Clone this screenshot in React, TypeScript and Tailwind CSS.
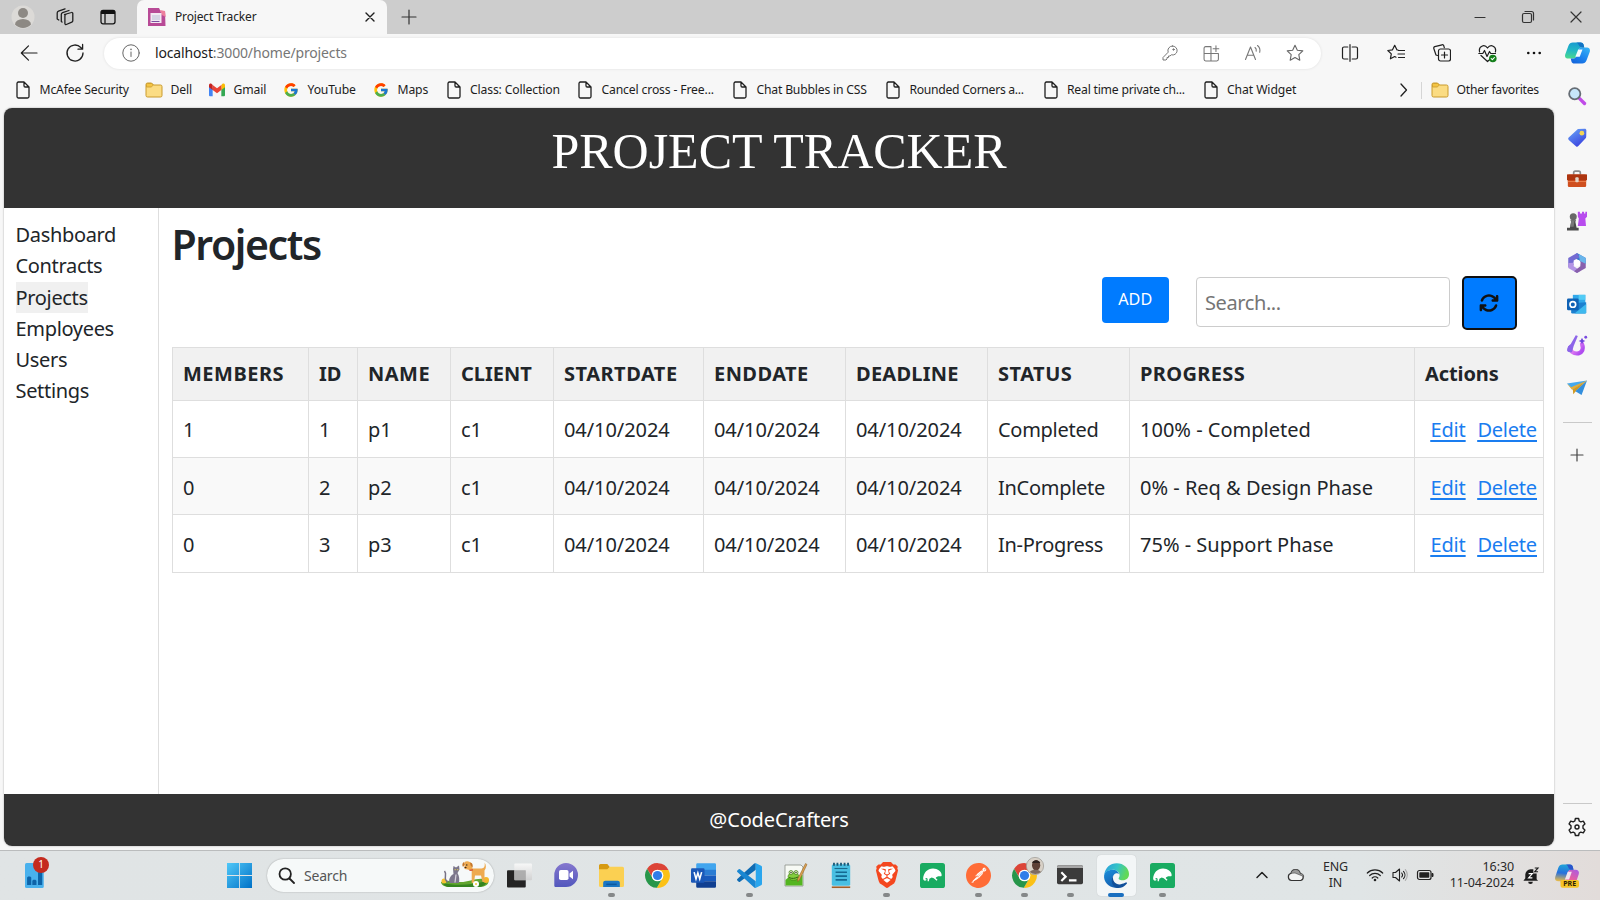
import type { ReactNode } from "react";
import { FcGoogle } from "react-icons/fc";
import { FaArrowsRotate } from "react-icons/fa6";
import { SiBrave, SiPostman } from "react-icons/si";

type SvgProps = { s?: number; c?: string; sw?: number; vb?: string; children: ReactNode };

function Line({ s = 20, c = "#1f1f1f", sw = 1.2, vb = "0 0 20 20", children }: SvgProps) {
  return (
    <svg width={s} height={s} viewBox={vb} fill="none" stroke={c} strokeWidth={sw} strokeLinecap="round" strokeLinejoin="round" className="block shrink-0">
      {children}
    </svg>
  );
}

function Pic({ s = 20, vb = "0 0 24 24", children }: SvgProps) {
  return (
    <svg width={s} height={s} viewBox={vb} className="block shrink-0 overflow-visible">
      {children}
    </svg>
  );
}

const FileIcon = () => (
  <Line s={18} vb="0 0 18 18" sw={1.3}>
    <path d="M4 1h6l5 5v9.500a1.500 1.500 0 0 1-1.500 1.500h-9A1.500 1.500 0 0 1 3 15.500v-13A1.500 1.500 0 0 1 4.500 1z M10 1v3.800a1.200 1.200 0 0 0 1.200 1.200H15" />
  </Line>
);

const FolderIcon = () => (
  <Pic s={18} vb="0 0 18 18">
    <path d="M1 3.500A1.500 1.500 0 0 1 2.500 2h4l2 2h7A1.500 1.500 0 0 1 17 5.500v9a1.500 1.500 0 0 1-1.500 1.500h-13A1.500 1.500 0 0 1 1 14.500z" fill="#fbdc83" stroke="#c99a2c" />
    <path d="M1.500 6h4.700l2.200-2-1.800-1.500h-4a1 1 0 0 0-1.100 1z" fill="#f4c443" stroke="#c99a2c" strokeWidth=".8" />
  </Pic>
);

const GmailIcon = () => (
  <Pic s={16} vb="0 0 24 24">
    <path d="M0 5v15a1.500 1.500 0 0 0 1.500 1.500H5.500V10z" fill="#4285f4" />
    <path d="M24 5v15a1.500 1.500 0 0 1-1.500 1.500H18.500V10z" fill="#34a853" />
    <path d="M18.500 4.500V12L24 8V5c0-2.600-2.600-3.200-4-2z" fill="#fbbc04" />
    <path d="M5.500 4.500 12 9.300l6.500-4.800V12L12 16.800 5.500 12z" fill="#ea4335" />
    <path d="M0 5c0-2.600 2.600-3.200 4-2l1.500 1.500V12L0 8z" fill="#c5221f" />
  </Pic>
);

const Copilot = ({ w, h, pre = false }: { w: number; h: number; pre?: boolean }) => (
  <svg width={w} height={h} viewBox="0 0 24 24" preserveAspectRatio="none" className="block shrink-0 overflow-visible">
    <defs>
      <linearGradient id={pre ? "cpA" : "coA"} x1="0.400" y1="0" x2=".3" y2="1">
        <stop offset="0" stopColor={pre ? "#1fa4d8" : "#189bd0"} />
        <stop offset=".5" stopColor={pre ? "#2870dd" : "#22b9c4"} />
        <stop offset="1" stopColor={pre ? "#eebd45" : "#4bd98c"} />
      </linearGradient>
      <linearGradient id={pre ? "cpB" : "coB"} x1="1" y1="0" x2=".3" y2="1">
        <stop offset="0" stopColor={pre ? "#a55be8" : "#39b8f5"} />
        <stop offset=".6" stopColor={pre ? "#ec5f9b" : "#1c84ef"} />
        <stop offset="1" stopColor={pre ? "#f7914b" : "#1668dd"} />
      </linearGradient>
    </defs>
    <path d="M3.300 4C4.200 1.500 5.500.5 7.500.5h7.500c1.500 0 2.300.8 2.800 2.300l.7 3.100h-2c-1.800 0-2.800.8-3.300 2.300l-2.300 7.600c-.5 1.600-1.400 2.300-3 2.300H3.600C.9 18.100-.5 16.500.2 13.500z" fill={pre ? "url(#cpA)" : "url(#coA)"} />
    <path d="M20.700 20c-.9 2.500-2.200 3.500-4.200 3.500H9c-1.500 0-2.300-.8-2.800-2.300l-.7-3.100h2c1.800 0 2.800-.8 3.300-2.300l2.300-7.600c.5-1.500 1.500-2.300 3.300-2.300h4c2.700 0 4.100 1.600 3.400 4.600z" fill={pre ? "url(#cpB)" : "url(#coB)"} />
    <path d="M12.700 8.200h4.100l-2.700 8h-4.200z" fill={pre ? "#f3e4ee" : "#f2fbff"} />
    <path d="M10.500.5H15c1.500 0 2.300.8 2.800 2.300l.7 3.100h-2c-1.400 0-2.600-.9-3-2C12.800 2 12 .6 10.500.5z" fill={pre ? "#2b55cc" : "#1273c4"} />
    {pre && (
      <g>
        <rect x="5.500" y="16.600" width="18.500" height="8.200" rx="2" fill="#f7c325" />
        <text x="14.700" y="23.400" fontSize="7" fontWeight="700" textAnchor="middle" fill="#2a2205" fontFamily="Noto Sans, sans-serif">PRE</text>
      </g>
    )}
  </svg>
);

function Bookmark({ icon, label, w, t = "" }: { icon: ReactNode; label: string; w: string; t?: string }) {
  return (
    <div className={`flex shrink-0 items-center ${w}`}>
      <div className="mr-2 flex w-[17px] shrink-0 justify-center">{icon}</div>
      <span className={`whitespace-nowrap ${t}`}>{label}</span>
    </div>
  );
}

function TitleBar() {
  return (
    <div className="flex h-[33.500px] shrink-0 items-stretch bg-[#cdcdcd]">
      <div className="flex w-[136.500px] items-center">
        <div className="flex w-[46px] justify-center">
          <Pic s={24}>
            <circle cx="12" cy="12" r="11.500" fill="#dcdad7" />
            <circle cx="12" cy="8" r="5" fill="#8d8984" />
            <path d="M4 19.500a8 5.500 0 0 1 16 0 11 11 0 0 1-16 0z" fill="#8d8984" />
          </Pic>
        </div>
        <div className="flex w-[38px] justify-center">
          <Line s={18} vb="0 0 18 18" sw={1.3}>
            <path d="M8.500 6.500 15.500 4.500a1 1 0 0 1 1.300 1v7.300a1.500 1.500 0 0 1-1 1.400l-5.500 2.300a1 1 0 0 1-1.400-.9V7.800a1.500 1.500 0 0 1 1-1.300z" />
            <path d="M6 14 5.300 13.500V6.500a2 2 0 0 1 1.300-1.900L13 2.500" />
            <path d="M2.800 12 1.200 11V5a2 2 0 0 1 1.300-1.900L9 .8" />
          </Line>
        </div>
        <div className="flex w-[48px] justify-center">
          <Pic s={16} vb="0 0 16 16">
            <rect x="1" y="1.300" width="14" height="13.500" rx="2" fill="none" stroke="#151515" strokeWidth="1.300" />
            <path d="M1 5V3a2 2 0 0 1 2-2h10a2 2 0 0 1 2 2v2z" fill="#111" />
            <path d="M5 5v9.500" stroke="#151515" strokeWidth="1.300" />
          </Pic>
        </div>
      </div>
      <div className="flex w-[250px] items-center rounded-t-[7px] bg-[#f7f7f7] pr-[8.500px] pl-[11px]">
        <Pic s={18} vb="0 0 18 18">
          <path d="M0 0h11l2 4 4-1 .5 15H0z" fill="#b84a96" />
          <path d="M12 2l5 1 .8 6-4-2z" fill="#ed7f9d" />
          <rect x="2.500" y="5" width="11" height="10" fill="#f2e8f2" />
          <path d="M4 7h8v5H4z" fill="#d6d4e4" />
          <path d="M3.500 13.500h8" stroke="#7b4fa0" />
        </Pic>
        <span className="ml-[9.500px] text-[12px] tracking-[-0.150px] text-[#222]">Project Tracker</span>
        <div className="ml-auto">
          <Line s={16} vb="0 0 16 16" sw={1.4}><path d="M4 4l8 8M12 4l-8 8" /></Line>
        </div>
      </div>
      <div className="flex w-[44px] items-center justify-center">
        <Line s={16} vb="0 0 16 16" sw={1.2} c="#333"><path d="M8 1v14M1 8h14" /></Line>
      </div>
      <div className="ml-auto flex items-center">
        <div className="flex w-[48px] justify-center"><Line s={14} vb="0 0 14 14" c="#333"><path d="M2 7.500h10" /></Line></div>
        <div className="flex w-[48px] justify-center">
          <Line s={14} vb="0 0 14 14" c="#333"><rect x="1.500" y="3.500" width="9" height="9" rx="1.500" /><path d="M4 1.500h6.500a2 2 0 0 1 2 2V10" /></Line>
        </div>
        <div className="flex w-[48px] justify-center"><Line s={14} vb="0 0 14 14" c="#333"><path d="M2 2l10 10M12 2L2 12" /></Line></div>
      </div>
    </div>
  );
}

function Toolbar() {
  const cell = "flex w-[46px] justify-center";
  const inner = "flex w-[41.700px] justify-center";
  return (
    <div className="flex h-[39px] shrink-0 items-center">
      <div className="flex w-[58px] justify-center">
        <Line s={18} vb="0 0 18 18" sw={1.2}><path d="M17 9H1.500M8.500 1.800 1.300 9l7.200 7.200" /></Line>
      </div>
      <div className="flex w-[46px] justify-center pr-[12px]">
        <Line s={20} sw={1.3}><path d="M18 10a8 8 0 1 1-2.200-5.500L17.500 6M17.600 1.500V6.200H13" /></Line>
      </div>
      <div className="flex h-[31px] w-[1217px] items-center rounded-full bg-white shadow-[0_0_3px_rgba(0,0,0,0.100)]">
        <div className="ml-[18px]">
          <Line s={18} vb="0 0 18 18" sw={1} c="#666"><circle cx="9" cy="9" r="8.200" /><path d="M9 8v4.500" /><path d="M9 5.200v.2" strokeWidth="1.500" /></Line>
        </div>
        <div className="ml-[15px] pb-px text-[14px] tracking-[-0.150px] text-[#767676]"><span className="text-[#1b1b1b]">localhost</span>:3000/home/projects</div>
        <div className="ml-auto mr-[5px] flex items-center">
          <div className={inner}>
            <Line s={16} vb="0 0 16 16" sw={1} c="#777"><path d="M10.500 1a4.500 4.500 0 1 1-1.200 8.800L8 11H6.500v1.500H5V14l-1 1H1v-2.500L6.200 7.200A4.500 4.500 0 0 1 10.500 1z" /><circle cx="11.500" cy="4.500" r=".7" fill="#777" /></Line>
          </div>
          <div className={inner}>
            <Line s={17} vb="0 0 16 16" sw={1} c="#777"><path d="M7.500 1.500h-5a1.500 1.500 0 0 0-1.500 1.500v10.500a1.500 1.500 0 0 0 1.500 1.500H13a1.500 1.500 0 0 0 1.500-1.500V8H1M7.500 1.500V15M12.200.8v5.400M9.500 3.500h5.400" /></Line>
          </div>
          <div className={inner}>
            <Line s={18} vb="0 0 18 18" sw={1.1} c="#777"><path d="M1.500 15.500 6.500 3 11.500 15.500M3.200 11.300h6.600M11 3.500c1.300 1 1.500 2.200 1.200 3.700M13.500 1.500c2.300 1.800 2.800 4.200 2.200 6.800" /></Line>
          </div>
          <div className={inner}>
            <Line s={18} vb="0 0 18 18" sw={1.1} c="#666"><path d="M9 1.200l2.350 5 5.450.7-4 3.800 1 5.500L9 13.500l-4.800 2.700 1-5.500-4-3.800 5.450-.7z" /></Line>
          </div>
        </div>
      </div>
      <div className="ml-[5.500px] flex items-center">
        <div className={cell}>
          <Line s={18} vb="0 0 18 18" sw={1.2}><path d="M6.800 3H3a1.500 1.500 0 0 0-1.500 1.500v9A1.500 1.500 0 0 0 3 15h3.800M11.200 3H15a1.500 1.500 0 0 1 1.500 1.500v9A1.500 1.500 0 0 1 15 15h-3.800M9 .7v16.600" /></Line>
        </div>
        <div className={cell}>
          <Line s={18} vb="0 0 18 18" sw={1.2}><path d="M11 6 9.900 5.800 7.700 1.300 5.500 5.800.8 6.500l3.500 3.400-.9 4.900 4.300-2.300 1.300.7M11.500 6.500h6M11 10h6.500M11.500 13.500h6" /></Line>
        </div>
        <div className={cell}>
          <Line s={18} vb="0 0 18 18" sw={1.2}><path d="M4.500 11.500 3 11 .8 4.500a1.400 1.400 0 0 1 1-1.800L9 .8a1.500 1.500 0 0 1 1.800 1l.5 1.800" /><rect x="5.500" y="5" width="12" height="12" rx="2" /><path d="M11.500 8v6M8.500 11h6" /></Line>
        </div>
        <div className={cell}>
          <Line s={19} vb="0 0 19 19" sw={1.2}><path d="M1.600 8C.2 2 6.500-.2 9.500 4c3-4.200 9.300-2 7.900 4M3 11.500l6.500 6 2-1.800M.8 9.500h4L6.500 6.500l2.500 6 2.500-5 1.300 2h4.700" /><circle cx="14.800" cy="14.500" r="3.800" fill="#16801c" stroke="none" /><path d="M13.200 14.600l1.200 1.100 2-2.200" stroke="#fff" strokeWidth="1.100" /></Line>
        </div>
        <div className={cell}>
          <Pic s={16} vb="0 0 16 16"><circle cx="2.300" cy="8" r="1.300" fill="#111" /><circle cx="8" cy="8" r="1.300" fill="#111" /><circle cx="13.700" cy="8" r="1.300" fill="#111" /></Pic>
        </div>
      </div>
      <div className="flex w-[42px] justify-center"><Copilot w={25} h={22} /></div>
    </div>
  );
}

function Bookmarks() {
  return (
    <div className="flex h-[35.500px] shrink-0 items-center pl-[14.500px] text-[12.200px] tracking-[-0.150px] text-[#1d1d1d]">
      <Bookmark w="w-[131px]" icon={<FileIcon />} label="McAfee Security" />
      <Bookmark w="w-[63px]" icon={<FolderIcon />} label="Dell" />
      <Bookmark w="w-[74px]" icon={<GmailIcon />} label="Gmail" />
      <Bookmark w="w-[90px]" icon={<FcGoogle size={16} />} label="YouTube" />
      <Bookmark w="w-[72.500px]" icon={<FcGoogle size={16} />} label="Maps" />
      <Bookmark w="w-[131.500px]" icon={<FileIcon />} label="Class: Collection" />
      <Bookmark w="w-[155px]" icon={<FileIcon />} label="Cancel cross - Free..." />
      <Bookmark w="w-[153px]" icon={<FileIcon />} label="Chat Bubbles in CSS" t="tracking-[-0.200px]" />
      <Bookmark w="w-[157.500px]" icon={<FileIcon />} label="Rounded Corners a..." t="tracking-[-0.300px]" />
      <Bookmark w="w-[160px]" icon={<FileIcon />} label="Real time private ch..." t="tracking-[-0.220px]" />
      <Bookmark w="w-[192.500px]" icon={<FileIcon />} label="Chat Widget" t="tracking-[-0.100px]" />
      <div className="flex w-[24px] items-center">
        <Line s={16} vb="0 0 16 16" sw={1.3}><path d="M6 2l5.500 6L6 14" /></Line>
      </div>
      <div className="mr-[10px] ml-[2px] h-[17px] w-px bg-[#d5d5d5]" />
      <Bookmark w="w-[120px]" icon={<FolderIcon />} label="Other favorites" t="tracking-[-0.270px]" />
    </div>
  );
}

const rail: ReactNode[] = [
  <Pic s={18}><path d="M14.500 14.500l7.500 7.500" stroke="#c04be8" strokeWidth="4.500" strokeLinecap="round" /><circle cx="9" cy="9" r="7.500" fill="#c6e6fa" stroke="#666d75" strokeWidth="2.400" /></Pic>,
  <Pic s={19}>
    <defs><linearGradient id="tag" x1="0" y1="0" x2=".6" y2="1"><stop stopColor="#6aa9f7" /><stop offset="1" stopColor="#3b45e0" /></linearGradient></defs>
    <path d="M12.500 1.200 21 .8c1.500 0 2.200.8 2.200 2.200L23 11c0 1-.4 1.700-1 2.300l-9 9.500c-1 1-2 1-3 .1L1 15c-1-1-1-2-.1-3z" fill="url(#tag)" /><circle cx="17.500" cy="6.500" r="3" fill="#f3d455" />
  </Pic>,
  <Pic s={20}>
    <path d="M8 7V4.500A2 2 0 0 1 10 2.500h4A2 2 0 0 1 16 4.500V7" fill="none" stroke="#8b8b8b" strokeWidth="2" />
    <rect x="1" y="6.500" width="22" height="15" rx="1.500" fill="#cf4f1f" /><path d="M0 6.500h24v7H0z" fill="#ad3510" /><path d="M1 15h22" stroke="#ee8450" /><rect x="10" y="10" width="4" height="6" rx="1" fill="#e3d5c8" />
  </Pic>,
  <Pic s={20}>
    <path d="M13 1h2.500v2H18V1h2.500v2H22V1h2v6l-2 2 .8 9H13l1.200-9L13 7z" fill="#b84cee" />
    <circle cx="7.500" cy="7" r="4.200" fill="#686868" /><path d="M4 11h7l-1 2 1.500 7H14v3.500H0V20h3.500L5 13z" fill="#4b4b4b" /><path d="M5 12h4l-1 7H4z" fill="#777" />
  </Pic>,
  <Pic s={20}>
    <path d="M12 0 22.500 6v7L15 9.500 8 5z" fill="#3b78cf" /><path d="M12 0 1.500 6v11l6.500-2.500V9l7-4z" fill="#746bd2" /><path d="M1.500 12v6L12 24l4.500-2.800L8 15.800v-4z" fill="#b395e5" /><path d="M22.500 12v6L12 24l-3.500-2 7.500-6V9l6.500 1z" fill="#8860ad" /><path d="M14 1.200 22.500 6v7L15.500 9.500z" fill="#69b5eb" /><circle cx="12" cy="12" r="4" fill="#fff" />
  </Pic>,
  <Pic s={20}>
    <path d="M7 1h15v10H7z" fill="#31a8ea" /><path d="M14 1h8v6h-8z" fill="#52cbf5" /><path d="M5 11l18-1v12a1.500 1.500 0 0 1-1.500 1.500H6.500A1.500 1.500 0 0 1 5 22z" fill="#1c80d0" /><path d="M23 12 9 23.500h12.500A1.500 1.500 0 0 0 23 22z" fill="#3fb9ee" /><rect x="0" y="5.500" width="14" height="14" rx="1.500" fill="#0f62b5" /><circle cx="7" cy="12.500" r="3.400" fill="none" stroke="#fff" strokeWidth="2" />
  </Pic>,
  <Pic s={20}>
    <defs><linearGradient id="des" x1="0" y1="0" x2="1" y2=".6"><stop stopColor="#8c55ef" /><stop offset=".5" stopColor="#e07af2" /><stop offset="1" stopColor="#b04df0" /></linearGradient></defs>
    <path d="M18 9.500c3 8-2 11.500-6 11.500-4.500 0-8-3-8.500-7" fill="none" stroke="url(#des)" strokeWidth="5" strokeLinecap="round" /><path d="M13 0 8 12c-1 3.500-1.500 5.500-2 7.500-3 0-6-.5-6-2.500 0-3 2-6 4.500-7.500L10.500-1z" fill="#8d65e9" /><path d="M18 2l1.300 2.700L22 6l-2.700 1.300L18 10l-1.300-2.700L14 6l2.700-1.300z" fill="#6d42dd" /><circle cx="22.500" cy="1.500" r="1.700" fill="#7a4be0" />
  </Pic>,
  <Pic s={20}>
    <path d="M0 6.500 24 3 7 14z" fill="#46a9ee" /><path d="M24 3 7 13.500l.5 6 3-3.500z" fill="#d39a22" /><path d="M24 3 10 16l7.500 4.500z" fill="#348fdd" /><path d="M0 6.500 6 14 24 3 5 11z" fill="#ecae31" />
  </Pic>,
];

function Rail() {
  return (
    <div className="flex w-[46px] shrink-0 flex-col items-center pt-[2.500px]">
      {rail.map((icon, i) => (
        <div key={i} className="flex h-[41.700px] w-full items-center justify-center">{icon}</div>
      ))}
      <div className="mt-[13px] h-px w-[29px] bg-[#c9c9c9]" />
      <div className="mt-[24px]"><Line s={16} vb="0 0 16 16" c="#444"><path d="M8 2v12M2 8h12" /></Line></div>
      <div className="mt-auto h-px w-[29px] bg-[#c9c9c9]" />
      <div className="mt-[13px] mb-[13px]">
        <Line s={20} sw={1.4}>
          <path d="M8.400 1.500h3.200l.6 2.500 1.600.9 2.500-.8 1.600 2.800-1.900 1.800v2.600l1.900 1.800-1.600 2.800-2.500-.8-1.600.9-.6 2.500H8.400L7.800 16l-1.600-.9-2.500.8-1.600-2.800L4 11.300V8.700L2.100 6.900l1.600-2.800 2.500.8L7.800 4z" /><circle cx="10" cy="10" r="2" />
        </Line>
      </div>
    </div>
  );
}

const columns = [
  { label: "MEMBERS", w: "w-[136px] tracking-[0.500px]" },
  { label: "ID", w: "w-[49px] tracking-[-0.100px]" },
  { label: "NAME", w: "w-[93px] tracking-[0.500px]" },
  { label: "CLIENT", w: "w-[103px] tracking-[0px]" },
  { label: "STARTDATE", w: "w-[150px] tracking-[0.500px]" },
  { label: "ENDDATE", w: "w-[142px] tracking-[0.450px]" },
  { label: "DEADLINE", w: "w-[142px] tracking-[0.250px]" },
  { label: "STATUS", w: "w-[142px] tracking-[0.500px]" },
  { label: "PROGRESS", w: "w-[285px] tracking-[0.350px]" },
  { label: "Actions", w: "w-[129px] tracking-[-0.100px]" },
];

const day = "04/10/2024";
const rows = [
  ["1", "1", "p1", "c1", day, day, day, "Completed", "100% - Completed"],
  ["0", "2", "p2", "c1", day, day, day, "InComplete", "0% - Req & Design Phase"],
  ["0", "3", "p3", "c1", day, day, day, "In-Progress", "75% - Support Phase"],
];

function ProjectTable() {
  return (
    <table className="w-[1371.500px] table-fixed border-collapse text-left text-[20px] leading-[30px]">
      <thead>
        <tr className="h-[53px] bg-[#f1f1f1]">
          {columns.map((c) => (
            <th key={c.label} className={`border border-[#dedede] pt-px pl-[10.500px] font-bold ${c.w}`}>{c.label}</th>
          ))}
        </tr>
      </thead>
      <tbody>
        {rows.map((r) => (
          <tr key={r[1]} className="h-[57.400px] even:bg-[#f9f9f9]">
            {r.map((v, i) => (
              <td key={i} className={`border border-[#dedede] pt-[3px] pl-[10.500px] whitespace-nowrap ${i === 7 ? "tracking-[-0.280px]" : i === 8 ? "" : "tracking-[-0.070px]"}`}>{v}</td>
            ))}
            <td className="border border-[#dedede] pt-[3px] pl-[16px] whitespace-nowrap">
              <div className="flex gap-[12px] tracking-[-0.220px] text-[#1a7df0] underline decoration-[1.500px] underline-offset-[3px]">
                <a>Edit</a>
                <a>Delete</a>
              </div>
            </td>
          </tr>
        ))}
      </tbody>
    </table>
  );
}

const nav = ["Dashboard", "Contracts", "Projects", "Employees", "Users", "Settings"];

function Page() {
  return (
    <div className="ml-[4px] flex min-h-0 flex-1 flex-col overflow-hidden rounded-[8px] bg-white text-[#212529] shadow-[0_0_2px_rgba(0,0,0,0.350)]">
      <header className="flex h-[99.500px] shrink-0 justify-center bg-[#333] pt-[12.500px]">
        <h1 className="font-['Liberation_Serif',serif] text-[50px] leading-[60px] text-white">PROJECT TRACKER</h1>
      </header>
      <div className="flex min-h-0 flex-1">
        <nav className="flex w-[154.500px] shrink-0 flex-col items-start border-r border-[#dedede] pt-[11.500px] pl-[11.500px] text-[20px] leading-[31.300px] tracking-[-0.330px]">
          {nav.map((n) => (
            <a key={n} className={n === "Projects" ? "bg-[#f0f0f0]" : ""}>{n}</a>
          ))}
        </nav>
        <main className="flex flex-1 flex-col pl-[13px]">
          <h2 className="mt-[11.500px] h-[56.500px] text-[41px] leading-[50px] font-semibold tracking-[-1.400px]">Projects</h2>
          <div className="mr-[37.500px] flex items-start justify-end">
            <button className="mt-[1px] mr-[27.500px] h-[46px] w-[66.500px] rounded-[4px] bg-[#007bff] text-[16.200px] text-white">ADD</button>
            <input placeholder="Search..." className="mt-[1px] mr-[12px] h-[50px] w-[254px] rounded-[4px] border border-[#ccc] pt-px pl-[8px] text-[20px] tracking-[-0.400px] placeholder:text-[#757575]" />
            <button className="flex h-[54px] w-[54.500px] items-center justify-center rounded-[5px] border-2 border-[#101010] bg-[#007bff] pt-px text-[#111]">
              <FaArrowsRotate size={20} />
            </button>
          </div>
          <div className="mt-[17px]"><ProjectTable /></div>
        </main>
      </div>
      <footer className="flex h-[52px] shrink-0 items-center justify-center bg-[#333] pt-px text-[20px] tracking-[-0.150px] text-white">@CodeCrafters</footer>
    </div>
  );
}

const Chrome = ({ s = 25 }: { s?: number }) => (
  <Pic s={s}>
    <path d="M2.770 6.010A11 11 0 0 1 21.800 7H12a5 5 0 0 0-4.330 7.500z" fill="#dc4437" />
    <path d="M21.800 7A11 11 0 0 1 11.430 22.990L16.330 14.500A5 5 0 0 0 12 7z" fill="#fbc117" />
    <path d="M11.430 22.990A11 11 0 0 1 2.770 6.010L7.670 14.500A5 5 0 0 0 16.330 14.500z" fill="#27964a" />
    <circle cx="12" cy="12" r="5.200" fill="#fff" /><circle cx="12" cy="12" r="4.100" fill="#2f7de9" />
  </Pic>
);

const Chameleon = () => (
  <Pic s={25}>
    <rect width="24" height="24" rx="2.500" fill="#19ab61" />
    <path d="M3 14.500c.5-5 4-9.200 9.500-9.200 4.500 0 8.300 3 8.300 6.200 0 .8-.3 1.300-1 1.300-2.500-.2-4 .3-4.800 1.700l1.800 1.600-.8 1-2.800-2.400-2-.8-2.200 1.200-.5 2.500H7.300v-2.500c-.8-.8-1.800-.8-2-.2-.2 1 1 1.300 1.300.7-.2 1.800-3.800 2.200-3.600-1.100z" fill="#fff" />
  </Pic>
);

const apps: { icon: ReactNode; dot?: boolean; active?: boolean }[] = [
  { icon: <Pic s={25}><defs><linearGradient id="tv" x1="0" y1="0" x2="0" y2="1"><stop stopColor="#fafafa" /><stop offset="1" stopColor="#cfcfcf" /></linearGradient></defs><rect x="0" y="7" width="18" height="16.500" rx="1" fill="#242424" /><rect x="7" y=".5" width="17" height="16" rx="1" fill="url(#tv)" opacity=".88" /><path d="M7 7h11v9.500H7z" fill="#a6a6a6" opacity=".8" /></Pic> },
  { icon: <Pic s={24}><defs><linearGradient id="ch" x1="0" y1="0" x2="0" y2="1"><stop stopColor="#8577ce" /><stop offset="1" stopColor="#5257bd" /></linearGradient></defs><path d="M12 0a12 12 0 1 1 0 24H1.500C.7 24 .3 23.400.3 22.500V12A12 12 0 0 1 12 0z" fill="url(#ch)" /><rect x="5" y="7" width="9.500" height="10" rx="1.800" fill="#fff" /><path d="M15.500 10.500 19 7.700v8.600l-3.500-2.800z" fill="#fff" /></Pic> },
  { dot: true, icon: <Pic s={25}><path d="M0 2.500A1.500 1.500 0 0 1 1.500 1H8l2.500 3L8 7H0z" fill="#d69a12" /><path d="M0 6h8l2.500-2.500h12A1.500 1.500 0 0 1 24 5v16.500a1.500 1.500 0 0 1-1.500 1.500h-21A1.500 1.500 0 0 1 0 21.500z" fill="#fbd052" /><path d="M4 23v-4a2 2 0 0 1 2-2h12a2 2 0 0 1 2 2v4z" fill="#1a76c4" /><path d="M7 20.500h10" stroke="#0c589f" strokeWidth="1.500" /></Pic> },
  { icon: <Chrome s={27} /> },
  { icon: <Pic s={25}><path d="M5 1.500A1.200 1.200 0 0 1 6.200.3h16.600A1.200 1.200 0 0 1 24 1.500V7H5z" fill="#41a5ee" /><path d="M5 6.500h19V12H5z" fill="#2b7cd3" /><path d="M5 12h19v5.500H5z" fill="#185abd" /><path d="M5 17.500h19v5a1.200 1.200 0 0 1-1.200 1.200H6.200A1.200 1.200 0 0 1 5 22.500z" fill="#103f91" /><rect y="5" width="13" height="14" rx="1.200" fill="#1b58b8" /><path d="M3 8.800l1.800 6.600L6.600 9.500l1.800 5.900 1.800-6.600" fill="none" stroke="#fff" strokeWidth="1.500" /></Pic> },
  { dot: true, icon: <Pic s={25}><path d="M16.500.5 3.900 12 .326 15.260a1 1 0 0 0 0 1.479l1.323 1.201a1 1 0 0 0 1.276.057L18.004 6.552V.2z" fill="#0f6bb3" /><path d="M2.925 6.002 18 17.448V23.800a1.500 1.500 0 0 1-1.500-.3L.326 8.740a1 1 0 0 1 0-1.479L1.650 6.059a1 1 0 0 1 1.276-.057z" fill="#1a87d2" /><path d="M18.210.21 23.150 2.587A1.500 1.500 0 0 1 24 3.940V20.060a1.500 1.500 0 0 1-.85 1.352L18.210 23.790a1.500 1.500 0 0 1-1.704-.29c.6.6 1.500.1 1.500-.7V1.200c0-.8-.9-1.300-1.500-.7a1.500 1.500 0 0 1 1.704-.29z" fill="#2aa6ee" /></Pic> },
  { icon: <Pic s={24}><path d="M2 2h16l2 2v19H2z" fill="#f7faf5" stroke="#8b8f88" strokeWidth=".8" /><path d="M2.500 17c4-5 9-3 17-5v10.500h-17z" fill="#53b520" /><ellipse cx="10.500" cy="13.500" rx="5.500" ry="3.800" fill="#82ce3c" stroke="#3c7a12" strokeWidth=".6" /><circle cx="8" cy="9.500" r="2" fill="#dff0c0" stroke="#3c7a12" strokeWidth=".7" /><circle cx="13" cy="9.500" r="2" fill="#dff0c0" stroke="#3c7a12" strokeWidth=".7" /><circle cx="8" cy="9.500" r=".7" fill="#222" /><circle cx="13" cy="9.500" r=".7" fill="#222" /><path d="M6 14.500c3 1.500 6 1 9-.5" fill="none" stroke="#2d6410" /><path d="M22.500.5 24 1.500 16.500 17l-2 1.500.2-2.700z" fill="#d9a050" stroke="#8a5a20" strokeWidth=".5" /></Pic> },
  { icon: <Pic s={26}><rect x="3.500" y="2" width="17" height="20" rx="1.500" fill="#49bfe2" /><path d="M6 6h12" stroke="#1b6c8e" /><path d="M7 9.500h10.500M7 13h10.500M7 16.500h10.500" stroke="#146a92" strokeWidth="1.500" /><path d="M5.500.8v2.700M8.700.8v2.700M12 .8v2.700M15.300.8v2.700M18.500.8v2.700" stroke="#1d5a78" strokeWidth="1.700" /><path d="M3.500 23.300h17" stroke="#a35f28" strokeWidth="1.500" /></Pic> },
  { dot: true, icon: <div className="relative flex"><div className="absolute inset-x-[5px] inset-y-[5px] bg-white" /><SiBrave size={26} color="#f4471f" className="relative" /></div> },
  { icon: <Chameleon /> },
  { dot: true, icon: <div className="relative flex"><div className="absolute inset-[3px] rounded-full bg-white" /><SiPostman size={25} color="#ff6c37" className="relative" /></div> },
  { dot: true, icon: <div className="relative"><Chrome s={27} /><div className="absolute -top-[5px] -right-[6px]"><Pic s={18}><circle cx="12" cy="12" r="11.500" fill="#d8d1c7" stroke="#9e9b95" strokeWidth="1" /><ellipse cx="13.500" cy="11" rx="5.500" ry="7" fill="#5d4035" /><path d="M8 8c2-5 9-5 11 0z" fill="#2c211e" /><path d="M5 20c3-4 12-4 15 0a11.500 11.500 0 0 1-15 0z" fill="#7d6b60" /></Pic></div></div> },
  { dot: true, icon: <Pic s={26}><rect y="3" width="24" height="17.500" rx="1.500" fill="#3b3b3b" /><path d="M0 5.500V4.500A1.500 1.500 0 0 1 1.500 3h21A1.500 1.500 0 0 1 24 4.500v1z" fill="#a6a6a6" /><path d="M4 9.500l4 4-4 4M11 17h7" stroke="#fff" strokeWidth="2" fill="none" /></Pic> },
  {
    active: true,
    icon: (
      <Pic s={25}>
        <defs>
          <linearGradient id="ed1" x1="0" y1="0" x2="1" y2=".3"><stop stopColor="#2a9bdf" /><stop offset=".55" stopColor="#35c5c6" /><stop offset="1" stopColor="#62d957" /></linearGradient>
          <linearGradient id="ed2" x1="0" y1="0" x2=".4" y2="1"><stop stopColor="#1a8fdc" /><stop offset="1" stopColor="#1560b0" /></linearGradient>
        </defs>
        <path d="M.3 11C1 4.500 6 .2 12.200.2 19 .2 24 5 24 10.500c0 4-2.800 6-5.800 6-2.500 0-4.200-.8-4.200-1.700 0-.6 1-1 1-3C15 8.800 12 6.500 8.500 6.500 4.500 6.500 1.500 8.500.3 11z" fill="url(#ed1)" />
        <path d="M.1 12c.5-3.500 4-5.500 8.200-5.500 3.500 0 5.700 2 6.200 4-1.200-1-3.500-1-5 .8-3.500 4.200 0 10 5.500 11.200-1 .8-3 1.300-4.500 1.200C4.500 23.200-.6 18 .1 12z" fill="url(#ed2)" />
        <path d="M8.800 12.500c-1.300 5.500 3.700 9.500 8.700 7.500 2-.7 3.500-1.500 4.300-1.300.5.200.3.800 0 1.200-2.300 3-6 4.600-9.500 4C7.500 22.600 6 16.500 8.800 12.500z" fill="#11509a" />
      </Pic>
    ),
  },
  { dot: true, icon: <Chameleon /> },
];

function Pets() {
  return (
    <svg width="50" height="28" viewBox="0 0 50 28" className="block overflow-visible">
      <path d="M1 21c6-3 12 0 20 0s18-6 27-2c2 4-3 7-8 7H10c-5 0-9-2-9-5z" fill="#62a630" />
      <path d="M3 22c12 3 30 2 44-2-1 4-5 6-9 6H10c-4 0-7-2-7-4z" fill="#358420" />
      <circle cx="4" cy="20" r="2.500" fill="#f5c232" /><circle cx="46" cy="19" r="3" fill="#f3b72b" />
      <path d="M8 21C2 18 8 14 4.500 10" fill="none" stroke="#777184" strokeWidth="1.500" />
      <path d="M13 8l.5-3 2.500 1.500L19 4.500l.5 4-2 3.500c2 3 2 7 1.500 10h-9c-2-3 0-7 3.500-9z" fill="#7c768b" />
      <path d="M16 13.500l-1 8" stroke="#d5d1db" strokeWidth="1.200" /><circle cx="15.200" cy="8.700" r=".6" fill="#e8d34a" /><circle cx="17.700" cy="8.700" r=".6" fill="#e8d34a" />
      <path d="M24.500 1c2.500-1.500 6-.5 7 2l1 4.500h9c2.800 0 3.800-3 3-6 2 2.500 1.800 6 0 8v11.500h-2l-1.500-6.500h-6l-1 7.500h-2.300V10l-4-1.500-3.200-.5v-2.500z" fill="#eeaa50" />
      <path d="M24 1c-2 .8-2 3.500-1 5l1.800-2.500zM30 1.500c2.500 0 3.200 3 2.500 5l-2-2.200z" fill="#c4762a" />
      <circle cx="26.800" cy="4" r=".7" fill="#222" /><ellipse cx="25.500" cy="6.500" rx="1.100" ry=".7" fill="#3b241a" /><path d="M29.500 9.300l3.500-.5" stroke="#d24936" strokeWidth="1.200" />
      <circle cx="36" cy="23" r="3" fill="#fff" /><circle cx="36" cy="23" r="1" fill="#f1c737" />
    </svg>
  );
}

function Taskbar() {
  return (
    <div className="flex h-[50px] shrink-0 items-center border-t border-[#babcbd] bg-linear-to-r from-[#e0e4e5] via-[#e0e5e6] via-85% to-[#e2dcda] pb-px text-[#2a2a2a]">
      <div className="flex w-[227px] pl-[25px]">
        <div className="relative">
          <Pic s={25}><rect width="18" height="24" rx="1.500" fill="#49b1ed" /><path d="M2 21v-7l1-1h2l1 1v7zM7 21v-4l1-1h2l1 1v4zM12.500 21V9l1-1h3v13z" fill="#0d63a8" /></Pic>
          <div className="absolute -top-[6px] left-[8px] flex size-[16px] items-center justify-center rounded-full bg-[#c42b1f] text-[10px] text-white">1</div>
        </div>
      </div>
      <div className="w-[40px]">
        <Pic s={25}>
          <defs><linearGradient id="win" x1="0" y1="0" x2="1" y2="1"><stop stopColor="#50c8f8" /><stop offset="1" stopColor="#0071c7" /></linearGradient></defs>
          <path d="M0 0h11.600v11.600H0zM12.400 0H24v11.600H12.400zM0 12.400h11.600V24H0zM12.400 12.400H24V24H12.400z" fill="url(#win)" />
        </Pic>
      </div>
      <div className="flex h-[33px] w-[227px] items-center rounded-full bg-[#f6f9f9] pl-[10.500px] shadow-[0_0_1.500px_rgba(0,0,0,0.350)]">
        <Line s={17} vb="0 0 17 17" sw={1.8} c="#222"><circle cx="7.200" cy="7" r="5.700" /><path d="M11.500 11.500 16 16" /></Line>
        <span className="ml-[9.500px] text-[14px] tracking-[-0.200px] text-[#555]">Search</span>
        <div className="ml-auto mr-[4px]"><Pets /></div>
      </div>
      <div className="ml-[3px] flex">
        {apps.map((a, i) => (
          <div key={i} className="flex h-[49px] w-[45.880px] flex-col items-center pt-[4px]">
            <div className={`relative flex h-[41px] w-[39px] items-center justify-center rounded-[4px] ${a.active ? "bg-[#f3f6f7] shadow-[0_0_1px_rgba(0,0,0,0.200)]" : ""}`}>
              {a.icon}
              {a.dot && <div className="absolute -bottom-[1px] h-[3.500px] w-[7px] rounded-full bg-[#858889]" />}
              {a.active && <div className="absolute -bottom-[1px] h-[3.500px] w-[16px] rounded-full bg-[#1a6fc0]" />}
            </div>
          </div>
        ))}
      </div>
      <div className="ml-auto flex items-center">
        <div className="flex w-[34px] justify-center"><Line s={14} vb="0 0 14 14" sw={1.5}><path d="M2 9.500l5-5 5 5" /></Line></div>
        <div className="flex w-[33px] justify-center">
          <Pic s={18} vb="0 0 18 18"><path d="M4.500 14.500a3.700 3.700 0 0 1-.5-7.200C5 2.500 12 2 13.200 7.500a3.600 3.600 0 0 1 .5 7z" fill="#f3f4f4" stroke="#333" strokeWidth="1.200" /><path d="M4 7.300C5 2.500 12 2 13.200 7.500c2 0 3.500 1 3.500 3L8 7z" fill="#9b9b9b" stroke="#444" strokeWidth=".6" /></Pic>
        </div>
        <div className="flex w-[47px] flex-col items-center text-[12.500px] leading-[16.500px] tracking-[-0.200px]"><span>ENG</span><span>IN</span></div>
        <div className="flex w-[32px] justify-center">
          <Line s={18} vb="0 0 18 18" sw={1.2}><path d="M1.300 7a11 11 0 0 1 15.400 0M3.700 9.500a7.500 7.500 0 0 1 10.600 0M6.200 12a4 4 0 0 1 5.600 0" /><circle cx="9" cy="14" r="1.300" fill="#222" stroke="none" /></Line>
        </div>
        <div className="flex w-[17px] justify-center">
          <Line s={16} vb="0 0 16 16" sw={1.1}><path d="M1 5.500h2.500L7.500 2v12l-4-3.500H1zM9.700 6a3 3 0 0 1 0 4M11.500 4.300a5.500 5.500 0 0 1 0 7.400" /><path d="M13.300 2.700a8 8 0 0 1 0 10.600" stroke="#aaa" /></Line>
        </div>
        <div className="flex w-[34px] justify-center">
          <Pic s={18} vb="0 0 18 18"><rect x="1.500" y="4.500" width="13.500" height="9" rx="2" fill="none" stroke="#222" strokeWidth="1.200" /><rect x="3.300" y="6.200" width="10" height="5.600" rx=".7" fill="#222" /><path d="M16 7.500h1v3h-1z" fill="#222" stroke="#222" /></Pic>
        </div>
        <div className="flex w-[72px] flex-col items-end text-[12.500px] leading-[16.500px] tracking-[-0.100px]"><span>16:30</span><span>11-04-2024</span></div>
        <div className="flex w-[32px] justify-center">
          <Pic s={17} vb="0 0 18 18"><path d="M3.500 8a5.500 5.500 0 0 1 5.500-5.500h3V7h3.500v6l1.500 1.500H1.500l2-2.500z" fill="#1c1c1c" /><path d="M6.500 15.500a2.500 2.500 0 0 0 5 0z" fill="#1c1c1c" /><path d="M7 7h4l-4 4.500h4" stroke="#fff" strokeWidth="1.200" fill="none" /><path d="M13.500 1h3.500L13.500 5H17" stroke="#1c1c1c" strokeWidth="1.200" fill="none" /></Pic>
        </div>
        <div className="flex w-[54px] pl-[9px]"><Copilot w={24} h={23} pre /></div>
      </div>
    </div>
  );
}

export default function App() {
  return (
    <div className="flex h-[900px] w-[1600px] flex-col overflow-hidden bg-[#f7f7f7] font-['Noto_Sans',sans-serif]">
      <TitleBar />
      <Toolbar />
      <div className="flex min-h-0 flex-1">
        <div className="flex w-[1554px] shrink-0 flex-col pb-[4.500px]">
          <Bookmarks />
          <Page />
        </div>
        <Rail />
      </div>
      <Taskbar />
    </div>
  );
}
